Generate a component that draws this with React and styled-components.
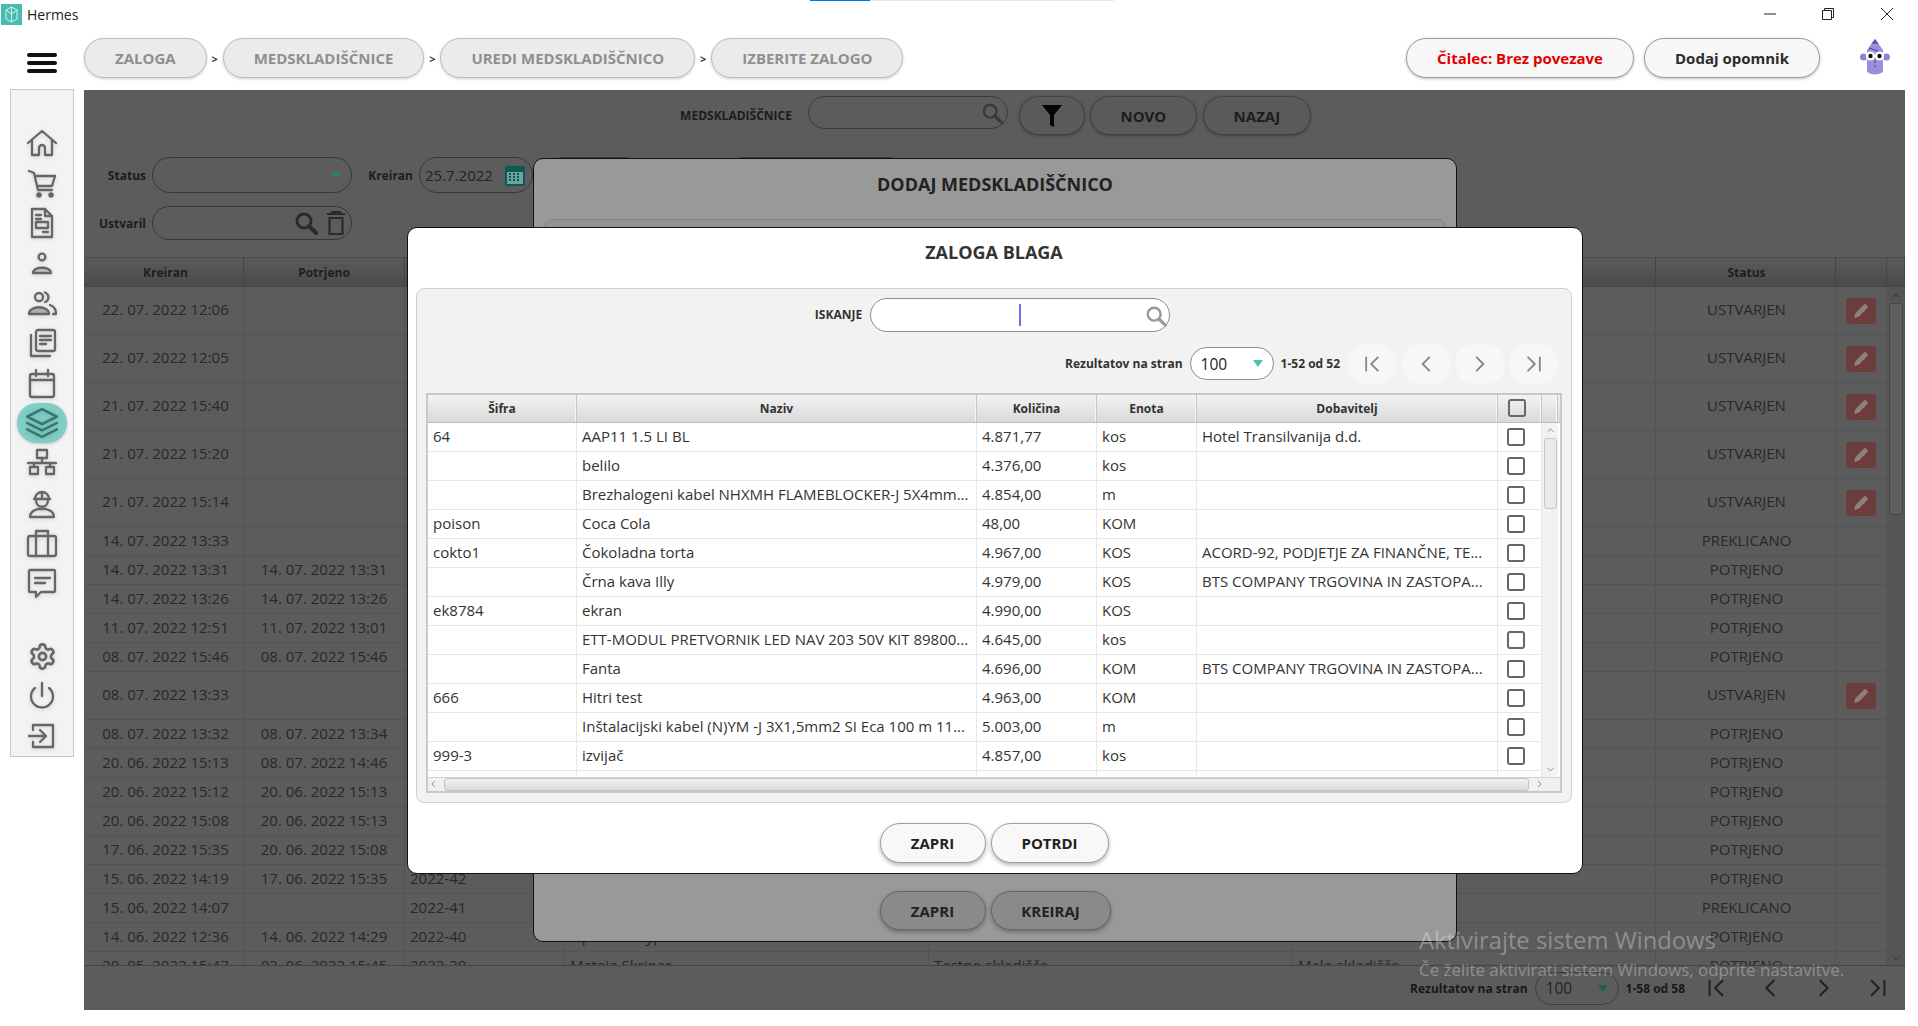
import React from "react";
import styled, { createGlobalStyle } from "styled-components";
import { Settings } from "lucide-react";

const Global = createGlobalStyle`
  html, body { margin: 0; padding: 0; background: #fff; overflow: hidden; }
  body { font-family: "Open Sans", "Liberation Sans", sans-serif; color: #333; }
  * { box-sizing: border-box; }
`;

const Root = styled.div`position: relative; width: 1918px; height: 1026px; background: #fff; overflow: hidden;`;
const Progress = styled.div`display: flex; height: 1px; padding-left: 810px;`;
const ProgressPart = styled.div`height: 1px; width: ${p => p.$w}px; background: ${p => p.$c};`;
const TitleBar = styled.div`display: flex; align-items: center; height: 29px; padding: 0 0 3px 1px;`;
const TitleText = styled.span`font-size: 14px; color: #222; margin-left: 5px; flex: 1;`;
const WinButtons = styled.div`display: flex; align-items: center; gap: 46px; padding-right: 24px; color: #222;`;

const TopBar = styled.div`display: flex; align-items: flex-start; height: 60px; padding: 8px 28px 0 27px;`;
const Burger = styled.div`display: flex; flex-direction: column; gap: 4px; width: 30px; margin: 15px 27px 0 0;`;
const BurgerLine = styled.span`display: block; height: 4px; border-radius: 2px; background: #111;`;
const Crumbs = styled.nav`display: flex; align-items: center; flex: 1;`;
const Crumb = styled.div`
  display: flex; align-items: center; height: 40px; padding: 0 30px; border-radius: 20px;
  background: #ebebeb; border: 1.5px solid #bdbdbd; color: #8f8f8f; font-weight: 700; font-size: 15px;
  box-shadow: 0 1px 3px rgba(0,0,0,.18); white-space: nowrap;
`;
const CrumbSep = styled.span`width: 16px; text-align: center; font-size: 11px; font-weight: 700; color: #333;`;
const TopButton = styled.div`
  display: flex; align-items: center; justify-content: center; height: 40px; width: ${p => p.$w}px; border-radius: 20px;
  background: #f7f7f7; border: 1.5px solid #9c9c9c; box-shadow: 0 1px 3px rgba(0,0,0,.25);
  color: ${p => p.$red ? "#e30000" : "#2b2b2b"}; font-weight: 700; font-size: 15px; margin-left: ${p => p.$ml || 0}px; white-space: nowrap;
`;
const Avatar = styled.svg`width: 30px; height: 38px; margin-left: 40px;`;

const Main = styled.div`display: flex; align-items: flex-start;`;
const Sidebar = styled.aside`
  display: flex; flex-direction: column; align-items: center; width: 64px; height: 668px; margin: -1px 10px 0 10px;
  padding-top: 33px; background: #f3f3f3; border: 1px solid #c9c9c9;
`;
const NavItem = styled.div`
  display: flex; align-items: center; justify-content: center; width: 50px; height: 40px; border-radius: 20px;
  background: ${p => p.$active ? "#80cec6" : "transparent"}; color: ${p => p.$active ? "#37756f" : "#666"};
  margin-top: ${p => p.$gap || 0}px; box-shadow: ${p => p.$active ? "0 1px 3px rgba(0,0,0,.2)" : "none"};
  svg { filter: drop-shadow(0 1px 2px rgba(0,0,0,.14)); }
`;

const Content = styled.main`
  position: relative; display: flex; flex-direction: column; width: 1821px; height: 920px; background: #5c5c5c; overflow: hidden;
`;
const Toolbar = styled.div`display: flex; align-items: center; justify-content: center; height: 39px; margin: 6px 0 -1px; padding-left: 2px;`;
const ToolLabel = styled.span`font-size: 12px; font-weight: 700; color: #1c1c1c; margin-right: 16px;`;
const SearchPill = styled.div`
  display: flex; align-items: center; justify-content: flex-end; width: ${p => p.$w}px; height: ${p => p.$h}px; padding-right: 4px;
  border: 1.5px solid #3a3a3a; border-radius: 17px; align-self: flex-start; gap: 3px;
`;
const DarkButton = styled.div`
  display: flex; align-items: center; justify-content: center; width: ${p => p.$w}px; height: 39px; margin-left: ${p => p.$ml}px;
  border: 1.5px solid #434343; border-radius: 20px; font-size: 15px; font-weight: 700; color: #1d1d1d;
  box-shadow: 0 1px 3px rgba(0,0,0,.3); background: #5a5a5a;
`;
const FilterRow = styled.div`display: flex; align-items: center; height: ${p => p.$h}px; margin-top: ${p => p.$mt}px;`;
const FilterLabel = styled.span`
  width: ${p => p.$w}px; margin: 0 6px 0 ${p => p.$ml || 0}px; text-align: right; font-size: 12px; font-weight: 700; color: #1c1c1c;
`;
const FieldPill = styled.div`
  display: flex; align-items: center; justify-content: space-between; width: ${p => p.$w}px; height: 100%; margin-left: ${p => p.$ml || 0}px;
  padding: 0 ${p => p.$pr || 10}px 0 5px; border: 1.5px solid #383838; border-radius: 18px; font-size: 15px; color: #222;
`;
const Arrow = styled.span`
  width: 0; height: 0; margin-left: auto; border-left: 5.5px solid transparent; border-right: 5.5px solid transparent;
  border-top: 7px solid ${p => p.$c};
`;

const HeadRow = styled.div`
  display: grid; grid-template-columns: 160px 161px 160px 364px 364px 363px 180px 51px 18px; height: 30px; margin-top: 17px;
  background: linear-gradient(#5a5a5a, #4b4b4b); border-top: 1px solid #484848; border-bottom: 1px solid #484848;
`;
const HeadCell = styled.div`
  display: flex; align-items: center; justify-content: center; padding-left: ${p => p.$pl || 0}px; font-size: 12px; font-weight: 700; color: #1f1f1f;
  border-right: 1px solid #454545;
`;
const BodyWrap = styled.div`display: flex; height: 678px;`;
const Rows = styled.div`width: 1803px; overflow: hidden;`;
const Row = styled.div`
  display: grid; grid-template-columns: 160px 161px 160px 364px 364px 363px 180px 51px; height: ${p => p.$tall ? 48 : 29}px;
`;
const Cell = styled.div`
  display: flex; align-items: center; justify-content: ${p => p.$center ? "center" : "flex-start"}; padding: 0 5px 3px ${p => p.$pl || 5}px;
  font-size: 15px; color: #282828; white-space: nowrap; overflow: hidden;
  border-right: 1px solid #545454; border-bottom: 1px solid #545454;
`;
const ActionCell = styled(Cell)`padding: 0 5px;`;
const EditBtn = styled.div`
  display: flex; align-items: center; justify-content: center; width: 30px; height: 26px; margin-right: 1px; border-radius: 3px; background: #6b3d3d;
`;
const VScroll = styled.div`
  display: flex; flex-direction: column; align-items: center; width: ${p => p.$w}px; background: ${p => p.$bg};
`;
const Thumb = styled.div`
  width: ${p => p.$w}px; height: ${p => p.$h}px; margin-top: ${p => p.$mt}px; border: 1px solid ${p => p.$line}; border-radius: 3px; background: ${p => p.$bg};
`;
const ArrowSlot = styled.div`margin-top: ${p => p.$top || 0}px; height: ${p => p.$h || 10}px; display: flex;`;
const Spacer = styled.div`flex: 1;`;
const Footer = styled.div`
  display: flex; align-items: center; justify-content: flex-end; height: 45px; padding-right: 2px; border-top: 1px solid #444; background: #5c5c5c;
`;
const PagerLabel = styled.span`font-size: 12px; font-weight: 700; color: ${p => p.$c}; white-space: nowrap;`;
const SmallSelect = styled.div`
  display: flex; align-items: center; width: ${p => p.$w}px; height: ${p => p.$h}px; margin: 0 7px; padding: 0 10px; border-radius: 17px;
  border: 1.5px solid ${p => p.$line}; font-size: 15.5px; color: ${p => p.$c}; background: ${p => p.$bg};
`;
const PageBtn = styled.div`
  display: flex; align-items: center; justify-content: center; width: 50px; height: 40px; border-radius: 20px; background: ${p => p.$bg}; margin-left: ${p => p.$ml}px;
`;

const Overlay = styled.div`
  position: absolute; inset: 0; display: flex; align-items: center; justify-content: center; padding-left: 1px;
`;
const Modal = styled.section`
  display: flex; flex-direction: column; width: ${p => p.$w}px; height: ${p => p.$h}px; padding: 0 ${p => p.$pr}px 0 ${p => p.$pl}px;
  background: ${p => p.$bg}; border: 1px solid #111; border-radius: 10px;
`;
const ModalTitle = styled.h2`
  display: flex; align-items: center; justify-content: center; height: 50px; padding-bottom: ${p => p.$pb || 0}px; margin: 0 0 10px; font-size: 18px; font-weight: 700; color: ${p => p.$c};
`;
const DimPanel = styled.div`height: 650px; background: #929292; border: 1px solid #848484; border-radius: 8px;`;
const ModalActions = styled.div`display: flex; justify-content: center; gap: 5px; margin-top: ${p => p.$mt}px;`;
const ActionBtn = styled.div`
  display: flex; align-items: center; justify-content: center; width: ${p => p.$w}px; height: ${p => p.$h}px; border-radius: 20px;
  background: ${p => p.$dim ? "#8a8a8a" : "#f8f8f8"}; border: 1.5px solid ${p => p.$dim ? "#666" : "#9f9f9f"};
  box-shadow: 0 2px 4px rgba(0,0,0,.3); font-size: 15px; font-weight: 700; color: #222;
`;
const Panel = styled.div`
  display: flex; flex-direction: column; height: 515px; padding: 9px 9px 0; background: #f2f2f2; border: 1px solid #cfcfcf; border-radius: 8px;
`;
const SearchRow = styled.div`display: flex; align-items: center; justify-content: center; height: 34px; padding-right: 3px;`;
const SearchLabel = styled.span`font-size: 12px; font-weight: 700; color: #333; margin-right: 8px;`;
const SearchBox = styled.div`
  position: relative; display: flex; align-items: center; justify-content: center; width: 300px; height: 34px;
  background: #fff; border: 1.5px solid #8e8e8e; border-radius: 17px;
`;
const Caret = styled.span`width: 1.5px; height: 22px; background: #6f6ff0;`;
const SearchIcon = styled.span`position: absolute; right: 2px; top: 6px; display: flex;`;
const PagerRow = styled.div`display: flex; align-items: center; justify-content: flex-end; height: 40px; margin: 12px 0 1px; padding-right: 3px;`;

const Grid = styled.div`display: flex; flex-direction: column; height: 400px; margin-top: 8px; border: 2px solid #c8c8c8; background: #fff;`;
const GridHead = styled.div`
  display: grid; grid-template-columns: 149px 400px 120px 100px 301px 44px 16px; height: 28px;
  background: linear-gradient(#f3f3f3, #d9d9d9); border-bottom: 1px solid #bdbdbd;
`;
const GridHeadCell = styled.div`
  display: flex; align-items: center; justify-content: center; padding-right: ${p => p.$pr || 0}px; font-size: 12px; font-weight: 700; color: #333;
  border-right: 1px solid #c6c6c6; box-shadow: inset -1px 0 0 #f6f6f6;
`;
const GridBody = styled.div`display: flex; height: 354px;`;
const GridRows = styled.div`width: 1114px; overflow: hidden;`;
const GridRow = styled.div`display: grid; grid-template-columns: 149px 400px 120px 100px 301px 44px; height: 29px;`;
const GridCell = styled.div`
  display: flex; align-items: center; padding: 0 5px 2px;
  font-size: 15px; color: #333; white-space: nowrap; overflow: hidden; border-right: 1px solid #e8e8e8; border-bottom: 1px solid #e8e8e8;
`;
const CheckCell = styled(GridCell)`justify-content: center; padding: 0 8px 0 0;`;
const Check = styled.input.attrs({ type: "checkbox" })`
  appearance: none; width: 18px; height: 18px; margin: 0; border: 2px solid #666; border-radius: 3px; background: ${p => p.$clear ? "transparent" : "#fff"};
`;
const HScroll = styled.div`display: flex; align-items: center; height: 14px; padding: 0 1px; background: #f0f0f0; border-top: 1px solid #d4d4d4; gap: 6px;`;
const HThumb = styled.div`width: 1085px; height: 13px; border: 1px solid #c4c4c4; border-radius: 3px; background: linear-gradient(#f2f2f2, #dcdcdc);`;
const Watermark = styled.div`position: absolute; left: 1419px; top: 924px; color: rgba(255,255,255,.32); pointer-events: none; white-space: nowrap;`;
const WaterTitle = styled.div`font-size: 23.8px; line-height: 32px;`;
const WaterLine = styled.div`font-size: 16.9px; line-height: 26px; margin-top: 1px;`;

const Ico = ({ children, w = 32, h = 32, sw = 2.3 }) => (
  <svg width={w} height={h} viewBox="0 0 32 32" fill="none" stroke="currentColor" strokeWidth={sw} strokeLinejoin="round" strokeLinecap="round">{children}</svg>
);

const icons = [
  <Ico><path d="M2 16 16 4l14 12M6 13v15h7v-7a3 3 0 0 1 6 0v7h7V13" /></Ico>,
  <Ico><path d="M3 4l5 2 4 17h14M9 9h20l-3 10H11" /><circle cx="13" cy="28" r="1.6" fill="currentColor" /><circle cx="25" cy="28" r="1.6" fill="currentColor" /></Ico>,
  <Ico><path d="M6 2h13l7 7v21H6zM19 2v7h7M10 8h5M10 12h5M10 15h12v6H10zM17 25h5" /></Ico>,
  <Ico><circle cx="16" cy="10" r="3.4" /><path d="M7 26c0-7 18-7 18 0z" fill="currentColor" fillOpacity=".25" /></Ico>,
  <Ico><circle cx="13" cy="10" r="4" /><path d="M19 5.5a5 5 0 0 1 0 9.5" /><path d="M3 27c0-9 20-9 20 0z" fill="currentColor" fillOpacity=".4" /><path d="M24 18c3 1 6 4 6 9h-3" /></Ico>,
  <Ico><rect x="10" y="3" width="19" height="21" rx="2" /><path d="M14 9h11M14 13h11M14 17h6M5 8v21h19" /></Ico>,
  <Ico><rect x="4" y="7" width="24" height="23" rx="2" /><path d="M4 13h24M10 3v6M22 3v6" /></Ico>,
  <Ico w={34} h={34}><path d="M16 3l14 7-14 7-14-7zM2 16l14 7 14-7M2 22l14 7 14-7" /></Ico>,
  <Ico><rect x="11" y="3" width="10" height="8" /><path d="M16 11v5M2 16h28M8 16v4M24 16v4" /><rect x="4" y="20" width="8" height="7" /><rect x="20" y="20" width="8" height="7" /></Ico>,
  <Ico><path d="M9 12a7 7 0 0 1 14 0zM16 5v7M8 12h16M10 13c0 9 12 9 12 0" /><path d="M4 30c0-7 6-7 8-8h8c2 1 8 1 8 8z" /></Ico>,
  <Ico><rect x="2" y="9" width="28" height="20" rx="2" /><path d="M10 9V4h12v5M10 9v20M22 9v20" /></Ico>,
  <Ico><path d="M4 3h24a1 1 0 0 1 1 1v20a1 1 0 0 1-1 1H15l-5 5v-5H4a1 1 0 0 1-1-1V4a1 1 0 0 1 1-1z" /><path d="M9 11h15M9 16h10" /></Ico>,
];
const bottomIcons = [
  <Settings size={29} strokeWidth={2.2} />,
  <Ico><path d="M16 3v13M9 8a11 11 0 1 0 14 0" /></Ico>,
  <Ico><path d="M7 10V5h20v22H7v-5M3 16h16M14 10l6 6-6 6" /></Ico>,
];

const L = ({ d, c, w = 20, h = 20, sw = 2.2 }) => (
  <svg width={w} height={h} viewBox="0 0 24 24" fill="none" stroke={c} strokeWidth={sw} strokeLinecap="round" strokeLinejoin="round"><path d={d} /></svg>
);
const pager = ["M5 4v16M19 4l-8 8 8 8", "M16 4l-8 8 8 8", "M8 4l8 8-8 8", "M5 4l8 8-8 8M19 4v16"];

const Lens = ({ s, c, sw = 2.6 }) => (
  <svg width={s} height={s} viewBox="0 0 24 24" fill="none" stroke={c} strokeWidth={sw} strokeLinecap="round"><circle cx="10" cy="10" r="7" /><path d="M15.5 15.5 22 22" strokeWidth={sw + 1} /></svg>
);

const pageRows = [
  ["22. 07. 2022 12:06", "", "USTVARJEN"], ["22. 07. 2022 12:05", "", "USTVARJEN"], ["21. 07. 2022 15:40", "", "USTVARJEN"],
  ["21. 07. 2022 15:20", "", "USTVARJEN"], ["21. 07. 2022 15:14", "", "USTVARJEN"], ["14. 07. 2022 13:33", "", "PREKLICANO"],
  ["14. 07. 2022 13:31", "14. 07. 2022 13:31", "POTRJENO"], ["14. 07. 2022 13:26", "14. 07. 2022 13:26", "POTRJENO"],
  ["11. 07. 2022 12:51", "11. 07. 2022 13:01", "POTRJENO"], ["08. 07. 2022 15:46", "08. 07. 2022 15:46", "POTRJENO"],
  ["08. 07. 2022 13:33", "", "USTVARJEN"], ["08. 07. 2022 13:32", "08. 07. 2022 13:34", "POTRJENO"],
  ["20. 06. 2022 15:13", "08. 07. 2022 14:46", "POTRJENO"], ["20. 06. 2022 15:12", "20. 06. 2022 15:13", "POTRJENO"],
  ["20. 06. 2022 15:08", "20. 06. 2022 15:13", "POTRJENO"], ["17. 06. 2022 15:35", "20. 06. 2022 15:08", "POTRJENO"],
  ["15. 06. 2022 14:19", "17. 06. 2022 15:35", "POTRJENO"], ["15. 06. 2022 14:07", "", "PREKLICANO"],
  ["14. 06. 2022 12:36", "14. 06. 2022 14:29", "POTRJENO"], ["20. 05. 2022 15:47", "02. 06. 2022 15:45", "POTRJENO"],
];

const stock = [
  ["64", "AAP11 1.5 LI BL", "4.871,77", "kos", "Hotel Transilvanija d.d."],
  ["", "belilo", "4.376,00", "kos", ""],
  ["", "Brezhalogeni kabel NHXMH FLAMEBLOCKER-J 5X4mm...", "4.854,00", "m", ""],
  ["poison", "Coca Cola", "48,00", "KOM", ""],
  ["cokto1", "Čokoladna torta", "4.967,00", "KOS", "ACORD-92, PODJETJE ZA FINANČNE, TE..."],
  ["", "Črna kava Illy", "4.979,00", "KOS", "BTS COMPANY TRGOVINA IN ZASTOPA..."],
  ["ek8784", "ekran", "4.990,00", "KOS", ""],
  ["", "ETT-MODUL PRETVORNIK LED NAV 203 50V KIT 89800...", "4.645,00", "kos", ""],
  ["", "Fanta", "4.696,00", "KOM", "BTS COMPANY TRGOVINA IN ZASTOPA..."],
  ["666", "Hitri test", "4.963,00", "KOM", ""],
  ["", "Inštalacijski kabel (N)YM -J 3X1,5mm2 SI Eca 100 m 11...", "5.003,00", "m", ""],
  ["999-3", "izvijač", "4.857,00", "kos", ""],
  ["", "", "", "", ""],
];

const pageHead = ["Kreiran", "Potrjeno", "Številka", "Ustvaril", "Iz skladišča", "V skladišče", "Status", "", ""];

export default function App() {
  return (
    <Root>
      <Global />
      <Progress><ProgressPart $w={60} $c="#0078d7" /><ProgressPart $w={244} $c="#e6e6e6" /></Progress>
      <TitleBar>
        <svg width="21" height="21" viewBox="0 0 21 21"><rect width="21" height="21" fill="#45bdb0" /><path d="M10.5 3 16 6v9l-5.500 3L5 15V6zM10.500 3v15M5 6l5.500 4L16 6" fill="none" stroke="#d5f2ee" strokeWidth="1" /></svg>
        <TitleText>Hermes</TitleText>
        <WinButtons>
          <svg width="12" height="12" viewBox="0 0 12 12"><path d="M0 6h12" stroke="#222" strokeWidth="1" /></svg>
          <svg width="12" height="12" viewBox="0 0 12 12" fill="none" stroke="#222"><path d="M.5 2.500h9v9h-9zM2.500 2.500v-2h9v9h-2" /></svg>
          <svg width="14" height="14" viewBox="0 0 14 14" stroke="#222" strokeWidth="1"><path d="M1 1l12 12M13 1 1 13" /></svg>
        </WinButtons>
      </TitleBar>
      <TopBar>
        <Burger><BurgerLine /><BurgerLine /><BurgerLine /></Burger>
        <Crumbs>
          <Crumb>ZALOGA</Crumb><CrumbSep>&gt;</CrumbSep>
          <Crumb>MEDSKLADIŠČNICE</Crumb><CrumbSep>&gt;</CrumbSep>
          <Crumb>UREDI MEDSKLADIŠČNICO</Crumb><CrumbSep>&gt;</CrumbSep>
          <Crumb>IZBERITE ZALOGO</Crumb>
        </Crumbs>
        <TopButton $red $w={228}>Čitalec: Brez povezave</TopButton>
        <TopButton $w={176} $ml={10}>Dodaj opomnik</TopButton>
        <Avatar viewBox="0 0 30 38">
          <path d="M7 12 15 1l8 11v22q-8 5-16 0z" fill="#9a8fd8" />
          <path d="M11 6.500 15 1l4 5.500q-4-2-8 0z" fill="#5b50a6" />
          <circle cx="3.500" cy="19" r="3.500" fill="#8f85cf" /><circle cx="26.500" cy="19" r="3.500" fill="#8f85cf" />
          <circle cx="10.500" cy="18" r="4.600" fill="#fff" /><circle cx="19.500" cy="18" r="4.600" fill="#fff" />
          <circle cx="10.500" cy="18" r="2.200" fill="#111" /><circle cx="19.500" cy="18" r="2.200" fill="#111" />
          <path d="M9 10l9 3M15 22v3M14 28h2" stroke="#4a4090" strokeWidth="1" fill="none" />
        </Avatar>
      </TopBar>
      <Main>
        <Sidebar>
          {icons.map((ic, i) => <NavItem key={i} $active={i === 7}>{ic}</NavItem>)}
          {bottomIcons.map((ic, i) => <NavItem key={i} $gap={i === 0 ? 33 : 0}>{ic}</NavItem>)}
        </Sidebar>
        <Content>
          <Toolbar>
            <ToolLabel>MEDSKLADIŠČNICE</ToolLabel>
            <SearchPill $w={200} $h={33}><Lens s={22} c="#3a3a3a" /></SearchPill>
            <DarkButton $w={66} $ml={11}>
              <svg width="22" height="24" viewBox="0 0 22 24"><path d="M1 1h20l-8 10v12l-4-2V11z" fill="#050505" /></svg>
            </DarkButton>
            <DarkButton $w={107} $ml={5}>NOVO</DarkButton>
            <DarkButton $w={108} $ml={6}>NAZAJ</DarkButton>
          </Toolbar>
          <FilterRow $h={36} $mt={23}>
            <FilterLabel $w={62}>Status</FilterLabel>
            <FieldPill $w={200}><Arrow $c="#2a8074" /></FieldPill>
            <FilterLabel $w={45} $ml={16}>Kreiran</FilterLabel>
            <FieldPill $w={114} $pr={6}>25.7.2022
              <svg width="22" height="24" viewBox="0 0 22 24"><rect x="1" y="3" width="20" height="20" fill="#0e5a52" /><rect x="3" y="9" width="16" height="12" fill="#6fa39d" /><path d="M5 11h2M9 11h2M13 11h2M5 14h2M9 14h2M13 14h2M5 17h2M9 17h2M13 17h2" stroke="#0e5a52" strokeWidth="2" /></svg>
            </FieldPill>
            <FieldPill $w={98} $ml={12} />
            <FieldPill $w={180} $ml={83} />
          </FilterRow>
          <FilterRow $h={34} $mt={13}>
            <FilterLabel $w={62}>Ustvaril</FilterLabel>
            <FieldPill $w={200} $pr={5}>
              <Spacer />
              <Lens s={24} c="#2a2a2a" sw={3} />
              <svg width="20" height="26" viewBox="0 0 20 26" fill="none" stroke="#2a2a2a" strokeWidth="2.2" style={{ marginLeft: 8 }}><path d="M1 4h18M6 4V2h8v2M3.500 8h13v16h-13z" /></svg>
            </FieldPill>
          </FilterRow>
          <HeadRow>
            {pageHead.map((h, i) => <HeadCell key={i} $pl={i === 0 ? 4 : i === 6 ? 2 : 0}>{h}</HeadCell>)}
          </HeadRow>
          <BodyWrap>
            <Rows>
              {pageRows.map((r, i) => {
                const tall = r[2] === "USTVARJEN";
                const hidden = i === 18;
                return (
                  <Row key={i} $tall={tall}>
                    <Cell $center $pl={9}>{r[0]}</Cell>
                    <Cell $center>{r[1]}</Cell>
                    <Cell>{`2022-${58 - i}`}</Cell>
                    <Cell>{hidden ? "Operater Typ" : "Mateja Skrinar"}</Cell>
                    <Cell>{hidden ? "" : "Testno skladišče"}</Cell>
                    <Cell>{hidden ? "" : "Malo skladišče"}</Cell>
                    <Cell $center $pl={7}>{r[2]}</Cell>
                    <ActionCell $center>{tall && <EditBtn><svg width="18" height="18" viewBox="0 0 18 18"><path d="M2 16l1.500-5L12 2.500a1.500 1.500 0 0 1 2 0l1.500 1.500a1.500 1.500 0 0 1 0 2L7 14.500z" fill="#8f7f7f" /></svg></EditBtn>}</ActionCell>
                  </Row>
                );
              })}
            </Rows>
            <VScroll $w={18} $bg="#555">
              <ArrowSlot $top={4}><L d="M5 15l7-7 7 7" c="#2a2a2a" w={14} h={10} /></ArrowSlot>
              <Thumb $w={14} $h={212} $mt={2} $line="#444" $bg="#5e5e5e" />
              <Spacer />
              <ArrowSlot $h={12}><L d="M5 9l7 7 7-7" c="#2a2a2a" w={14} h={10} /></ArrowSlot>
            </VScroll>
          </BodyWrap>
          <Footer>
            <PagerLabel $c="#181818">Rezultatov na stran</PagerLabel>
            <SmallSelect $w={84} $h={33} $line="#3d3d3d" $c="#222" $bg="transparent">100<Arrow $c="#205f58" /></SmallSelect>
            <PagerLabel $c="#181818">1-58 od 58</PagerLabel>
            {pager.map((d, i) => <PageBtn key={i} $ml={i ? 4 : 6} $bg="transparent"><L d={d} c="#222" w={22} h={22} /></PageBtn>)}
          </Footer>
          <Overlay>
            <Modal $w={924} $h={784} $pl={10} $pr={10} $bg="#999">
              <ModalTitle $c="#222">DODAJ MEDSKLADIŠČNICO</ModalTitle>
              <DimPanel />
              <ModalActions $mt={22}>
                <ActionBtn $dim $w={106} $h={39}>ZAPRI</ActionBtn>
                <ActionBtn $dim $w={120} $h={39}>KREIRAJ</ActionBtn>
              </ModalActions>
            </Modal>
          </Overlay>
          <Overlay>
            <Modal $w={1176} $h={647} $pl={8} $pr={10} $bg="#fff">
              <ModalTitle $c="#333" $pb={2}>ZALOGA BLAGA</ModalTitle>
              <Panel>
                <SearchRow>
                  <SearchLabel>ISKANJE</SearchLabel>
                  <SearchBox>
                    <Caret />
                    <SearchIcon><Lens s={22} c="#999" /></SearchIcon>
                  </SearchBox>
                </SearchRow>
                <PagerRow>
                  <PagerLabel $c="#333">Rezultatov na stran</PagerLabel>
                  <SmallSelect $w={84} $h={33} $line="#8e8e8e" $c="#222" $bg="#fff">100<Arrow $c="#4cc2b5" /></SmallSelect>
                  <PagerLabel $c="#333">1-52 od 52</PagerLabel>
                  {pager.map((d, i) => <PageBtn key={i} $ml={i ? 4 : 7} $bg="#f7f7f7"><L d={d} c="#888" w={20} h={20} /></PageBtn>)}
                </PagerRow>
                <Grid>
                  <GridHead>
                    {["Šifra", "Naziv", "Količina", "Enota", "Dobavitelj"].map(h => <GridHeadCell key={h}>{h}</GridHeadCell>)}
                    <GridHeadCell $pr={5}><Check $clear readOnly /></GridHeadCell>
                    <GridHeadCell />
                  </GridHead>
                  <GridBody>
                    <GridRows>
                      {stock.map((r, i) => (
                        <GridRow key={i}>
                          {r.map((c, j) => <GridCell key={j}>{c}</GridCell>)}
                          <CheckCell>{r[2] && <Check readOnly />}</CheckCell>
                        </GridRow>
                      ))}
                    </GridRows>
                    <VScroll $w={16} $bg="#f2f2f2">
                      <ArrowSlot $top={3}><L d="M5 15l7-7 7 7" c="#777" w={13} h={9} /></ArrowSlot>
                      <Thumb $w={13} $h={71} $mt={2} $line="#c8c8c8" $bg="#e9e9e9" />
                      <Spacer />
                      <ArrowSlot $h={12}><L d="M5 9l7 7 7-7" c="#777" w={13} h={9} /></ArrowSlot>
                    </VScroll>
                  </GridBody>
                  <HScroll>
                    <L d="M15 5l-7 7 7 7" c="#777" w={9} h={12} />
                    <HThumb />
                    <L d="M9 5l7 7-7 7" c="#777" w={9} h={12} />
                  </HScroll>
                </Grid>
              </Panel>
              <ModalActions $mt={20}>
                <ActionBtn $w={106} $h={40}>ZAPRI</ActionBtn>
                <ActionBtn $w={118} $h={40}>POTRDI</ActionBtn>
              </ModalActions>
            </Modal>
          </Overlay>
        </Content>
      </Main>
      <Watermark>
        <WaterTitle>Aktivirajte sistem Windows</WaterTitle>
        <WaterLine>Če želite aktivirati sistem Windows, odprite nastavitve.</WaterLine>
      </Watermark>
    </Root>
  );
}
